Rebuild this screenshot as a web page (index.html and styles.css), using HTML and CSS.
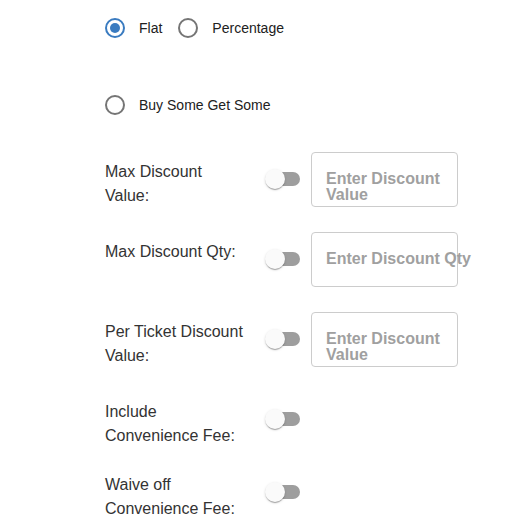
FILE: index.html
```html
<!DOCTYPE html>
<html lang="en">
<head>
  <meta charset="UTF-8" />
  <meta name="viewport" content="width=device-width, initial-scale=1.0"/>
  <title>Discount Settings</title>
  <link rel="stylesheet" href="styles.css">
</head>
<body>
  <div class="discount-form">
    <div class="radio-row">
      <label class="radio">
        <span class="radio-circle checked"></span>
        Flat
      </label>
      <label class="radio">
        <span class="radio-circle"></span>
        Percentage
      </label>
    </div>

    <div class="radio-row single">
      <label class="radio">
        <span class="radio-circle"></span>
        Buy Some Get Some
      </label>
    </div>

    <div class="field-row">
      <div class="field-label">Max Discount Value:</div>
      <span class="toggle"><span class="toggle-track"></span><span class="toggle-thumb"></span></span>
      <div class="text-box">Enter Discount Value</div>
    </div>

    <div class="field-row">
      <div class="field-label">Max Discount Qty:</div>
      <span class="toggle"><span class="toggle-track"></span><span class="toggle-thumb"></span></span>
      <div class="text-box one-line">Enter Discount Qty</div>
    </div>

    <div class="field-row">
      <div class="field-label">Per Ticket Discount Value:</div>
      <span class="toggle"><span class="toggle-track"></span><span class="toggle-thumb"></span></span>
      <div class="text-box">Enter Discount Value</div>
    </div>

    <div class="field-row short">
      <div class="field-label">Include Convenience Fee:</div>
      <span class="toggle"><span class="toggle-track"></span><span class="toggle-thumb"></span></span>
    </div>

    <div class="field-row">
      <div class="field-label">Waive off Convenience Fee:</div>
      <span class="toggle"><span class="toggle-track"></span><span class="toggle-thumb"></span></span>
    </div>
  </div>
</body>
</html>
```

FILE: styles.css
```css
* {
  box-sizing: border-box;
}
body {
  margin: 0;
  font-family: "Liberation Sans", Arial, sans-serif;
  background: #fff;
  color: #333;
}
.discount-form {
  padding: 18px 0 0 105px;
}
.radio-row {
  display: flex;
  align-items: center;
  gap: 16px;
  height: 20px;
  margin-bottom: 57px;
}
.radio-row.single {
  margin-bottom: 37px;
}
.radio {
  display: flex;
  align-items: center;
  gap: 14px;
  font-size: 14px;
  line-height: 18px;
  padding-bottom: 1px;
  color: #212121;
}
.radio-circle {
  position: relative;
  width: 20px;
  height: 20px;
  margin-top: 1px;
  border: 2px solid #757575;
  border-radius: 50%;
}
.radio-circle.checked {
  border-color: #3a7bc0;
}
.radio-circle.checked::after {
  content: "";
  position: absolute;
  top: 3px;
  left: 3px;
  width: 10px;
  height: 10px;
  border-radius: 50%;
  background: #3a7bc0;
}
.field-row {
  display: flex;
  align-items: flex-start;
  min-height: 56px;
  margin-bottom: 24px;
}
.field-row.short {
  margin-bottom: 17px;
}
.field-label {
  width: 145px;
  padding-top: 8px;
  font-size: 16px;
  line-height: 24px;
  color: #333;
}
.toggle {
  position: relative;
  width: 36px;
  height: 20px;
  margin: 17px 0 0 15px;
}
.toggle-track {
  position: absolute;
  top: 3px;
  left: 1px;
  width: 34px;
  height: 14px;
  border-radius: 7px;
  background: #9e9e9e;
}
.toggle-thumb {
  position: absolute;
  top: 0;
  left: 0;
  width: 20px;
  height: 20px;
  border-radius: 50%;
  background: #fafafa;
  box-shadow: 0 2px 1px -1px rgba(0, 0, 0, 0.2), 0 1px 1px 0 rgba(0, 0, 0, 0.14), 0 1px 3px 0 rgba(0, 0, 0, 0.12);
}
.text-box {
  width: 147px;
  height: 55px;
  margin-left: 10px;
  padding: 18px 14px 0;
  border: 1px solid #ccc;
  border-radius: 4px;
  font-size: 16px;
  font-weight: bold;
  line-height: 16px;
  color: #a0a0a0;
}
.text-box.one-line {
  padding-top: 18px;
  white-space: nowrap;
}
```
